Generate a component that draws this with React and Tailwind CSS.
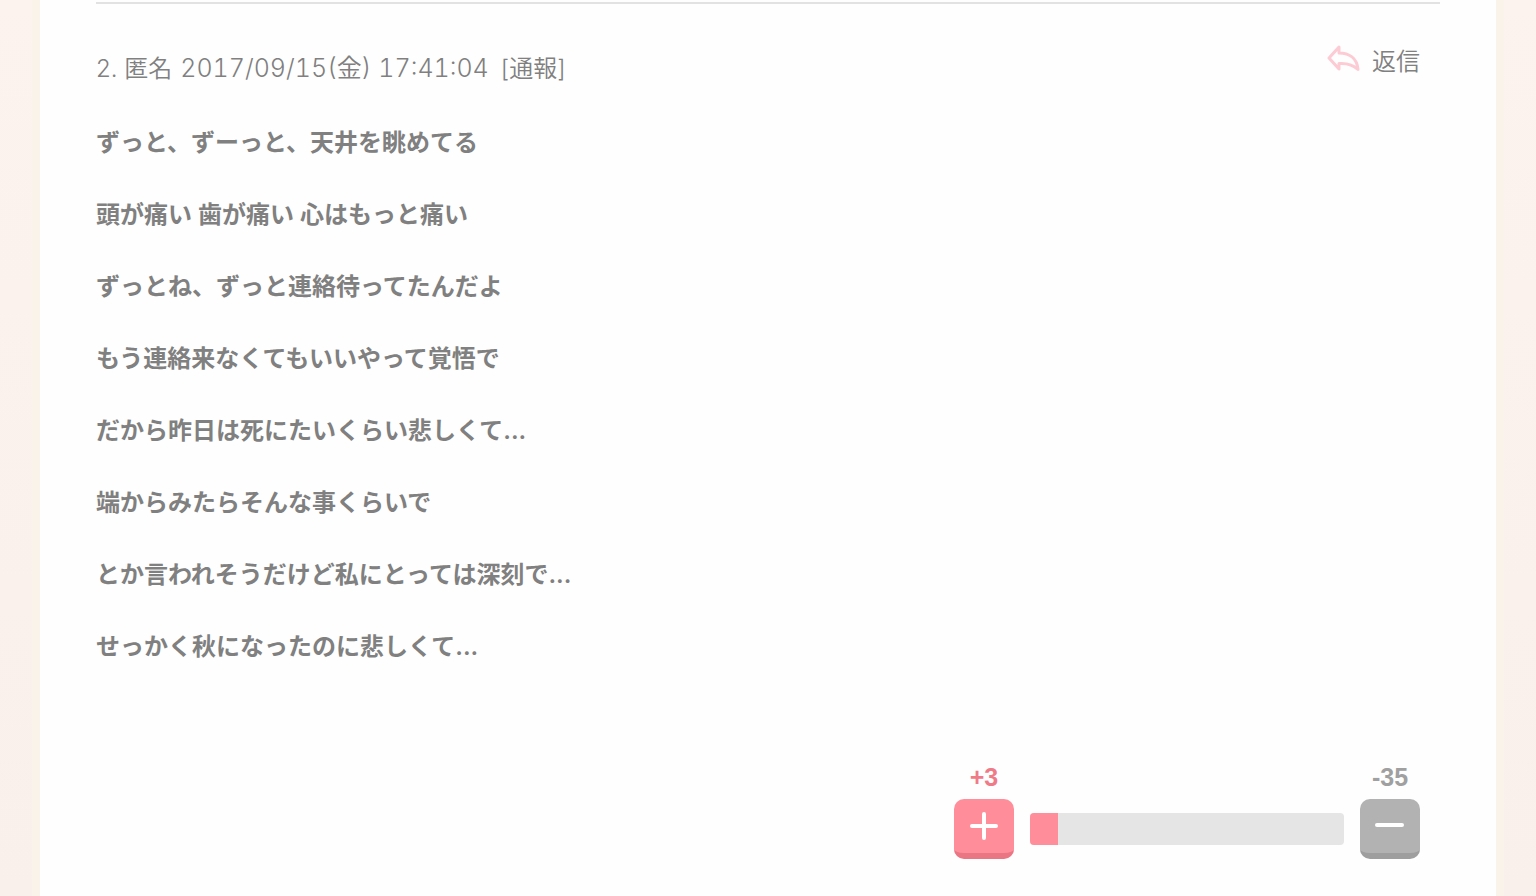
const lines = [
  'ずっと、ずーっと、天井を眺めてる',
  '頭が痛い 歯が痛い 心はもっと痛い',
  'ずっとね、ずっと連絡待ってたんだよ',
  'もう連絡来なくてもいいやって覚悟で',
  'だから昨日は死にたいくらい悲しくて...',
  '端からみたらそんな事くらいで',
  'とか言われそうだけど私にとっては深刻で...',
  'せっかく秋になったのに悲しくて...',
];

function ReplyIcon() {
  return (
    <svg width="34" height="36" viewBox="0 0 34 36" fill="none" stroke="#fccbd3" strokeWidth="3" strokeLinejoin="round" aria-hidden="true">
      <path d="M3 14 L13 3 V9 C23 9 31 14 32 25.500 C27 20.500 21 19 13 19.500 V25 Z" />
    </svg>
  );
}

function VoteBar({ plus, minus }) {
  return (
    <div className="flex h-8 grow overflow-hidden rounded bg-[#e5e5e5]">
      <div className="bg-[#ff8e9a]" style={{ width: `${(plus / (plus + minus)) * 112}%` }} />
    </div>
  );
}

export default function App() {
  return (
    <div className="min-h-screen bg-linear-to-b from-[#fcf3ee] to-[#f9f0eb] px-8 font-[Inter,'Noto_Sans_CJK_JP',sans-serif] text-2xl text-[#808080]">
      <main className="min-h-screen border-x-8 border-[#f9f3e9] bg-[#fefefe] px-14 pt-0.5">
        <article className="border-t-2 border-[#e2e2e2] pr-5 pb-9">
          <header className="flex items-start justify-between pt-9 font-[350]">
            <div className="flex items-baseline gap-2 pt-1 leading-[48px]">
              <p>2. 匿名</p>
              <time dateTime="2017-09-15T17:41:04" className="text-[25px] tabular-nums">
                2017/09/15(金) 17:41:04
              </time>
              <a href="#report" className="pl-1">[通報]</a>
            </div>
            <a href="#reply" className="flex items-center gap-3 leading-[44px]">
              <ReplyIcon />
              返信
            </a>
          </header>
          <div className="pt-3.5 leading-[72px] font-semibold">
            {lines.map((line) => (
              <p key={line}>{line}</p>
            ))}
          </div>
          <div className="flex justify-end pt-19">
            <div className="flex w-[466px] items-end gap-4 font-['Liberation_Sans',sans-serif] text-[25px] font-bold">
              <div className="flex flex-col items-center gap-1">
                <span className="leading-9 text-[#ef7b89]">+3</span>
                <button type="button" aria-label="プラス" className="flex size-[60px] items-center justify-center rounded-[10px] border-b-6 border-[#ea7583] bg-[#ff8e9a]">
                  <svg width="30" height="30" viewBox="0 0 30 30" stroke="#fff" strokeWidth="4" strokeLinecap="round" aria-hidden="true">
                    <path d="M3 15H27M15 3V27" />
                  </svg>
                </button>
              </div>
              <div className="flex grow pb-3.5">
                <VoteBar plus={3} minus={35} />
              </div>
              <div className="flex flex-col items-center gap-1">
                <span className="leading-9 text-[#a0a0a0]">-35</span>
                <button type="button" aria-label="マイナス" className="flex size-[60px] items-center justify-center rounded-[10px] border-b-6 border-[#9e9e9e] bg-[#b2b2b2]">
                  <svg width="32" height="30" viewBox="0 0 32 30" stroke="#fff" strokeWidth="4" strokeLinecap="round" aria-hidden="true">
                    <path d="M3 14H28" />
                  </svg>
                </button>
              </div>
            </div>
          </div>
        </article>
      </main>
    </div>
  );
}
